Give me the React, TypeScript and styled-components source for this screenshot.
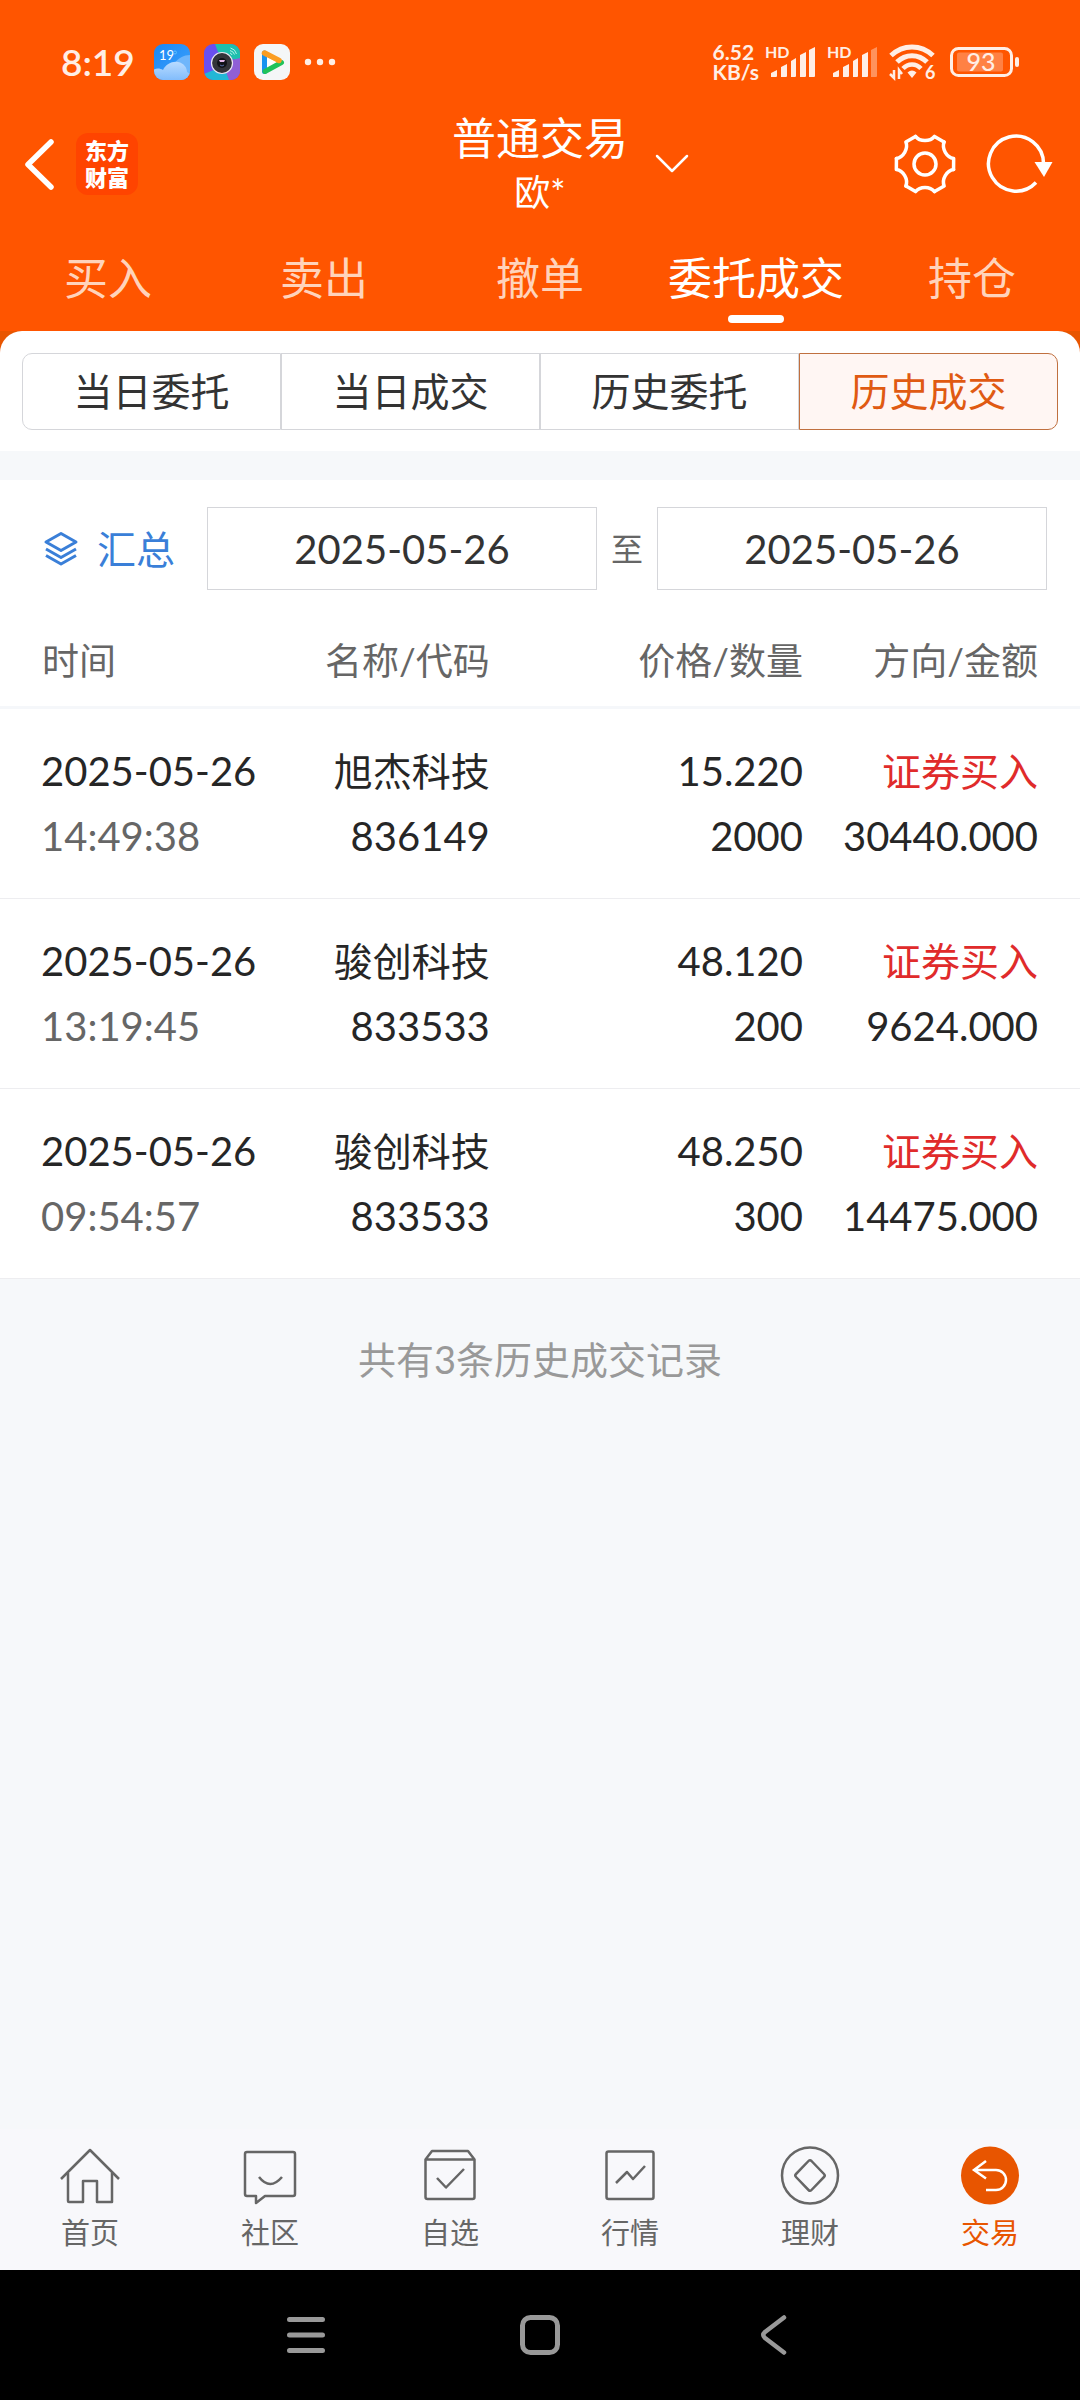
import React, { useState } from "react";
import styled, { createGlobalStyle } from "styled-components";

const color = {
  brand: "#ff5500",
  brandDeep: "#e85500",
  ink: "#262626",
  inkSoft: "#333333",
  muted: "#666666",
  faint: "#999999",
  line: "#d5d6da",
  rowLine: "#ededf0",
  page: "#f6f8fa",
  bar: "#f8f8fb",
  blue: "#3a7fd8",
  red: "#e02b2b",
};

const GlobalStyle = createGlobalStyle`
  *, *::before, *::after { box-sizing: border-box; }
  body {
    margin: 0;
    background: ${color.page};
    font-family: Lato, "Noto Sans CJK SC", sans-serif;
    color: ${color.ink};
  }
  button, input { font: inherit; color: inherit; }
  button { border: 0; padding: 0; background: none; cursor: pointer; }
  svg { display: block; flex: none; overflow: visible; }
`;

const Page = styled.div`
  display: flex;
  flex-direction: column;
  min-height: 100vh;
`;

/* ---------- status bar ---------- */

const Top = styled.header`
  background: ${color.brand};
  color: #fff;
`;

const StatusBar = styled.div`
  display: flex;
  align-items: center;
  justify-content: space-between;
  height: 110px;
  padding: 14px 61px 0 61px;
  color: #ffeee5;
`;

const StatusGroup = styled.div<{ $gap: number }>`
  display: flex;
  align-items: center;
  gap: ${(p) => p.$gap}px;
`;

const Clock = styled.span`
  margin-right: 5px;
  font-size: 37px;
  line-height: 40px;
  font-weight: 600;
`;

const Speed = styled.div`
  font-size: 21px;
  line-height: 20px;
  font-weight: 700;
`;

const SpeedLine = styled.div``;

/* ---------- title bar ---------- */

const TitleBar = styled.div`
  display: grid;
  grid-template-columns: 1fr auto 1fr;
  align-items: center;
`;

const TitleLeft = styled.div`
  display: flex;
  align-items: center;
  gap: 20px;
  padding-left: 22px;
`;

const TitleRight = styled.div`
  display: flex;
  align-items: center;
  justify-content: space-between;
  padding: 0 26px 0 26px;
`;

const Actions = styled.div`
  display: flex;
  gap: 28px;
`;

const Title = styled.h1`
  margin: 0;
  font-size: 44px;
  line-height: 56px;
  font-weight: 400;
  text-align: center;
`;

const Account = styled.div`
  font-size: 36px;
  line-height: 52px;
  text-align: center;
`;

const Logo = styled.div`
  display: grid;
  place-content: center;
  width: 62px;
  height: 62px;
  border-radius: 12px;
  background: #ff4400;
  font-size: 22px;
  line-height: 27px;
  font-weight: 900;
`;

/* ---------- main tabs ---------- */

const Tabs = styled.nav`
  display: grid;
  grid-template-columns: repeat(5, 1fr);
  padding: 30px 0 8px;
`;

const Tab = styled.button<{ $active: boolean }>`
  display: flex;
  flex-direction: column;
  align-items: center;
  gap: 7px;
  font-size: 44px;
  line-height: 60px;
  color: ${(p) => (p.$active ? "#fff" : "#ffd3bb")};

  &::after {
    content: "";
    width: 56px;
    height: 8px;
    border-radius: 4px;
    background: ${(p) => (p.$active ? "#fff" : "transparent")};
  }
`;

/* ---------- sheet ---------- */

const SheetBack = styled.div`
  background: ${color.brandDeep};
`;

const Sheet = styled.div`
  padding: 22px 22px 21px;
  border-radius: 22px 22px 0 0;
  background: #fff;
`;

const Segments = styled.div`
  display: grid;
  grid-template-columns: repeat(4, 1fr);
`;

const Segment = styled.button<{ $active: boolean }>`
  height: 77px;
  padding-bottom: 1px;
  border: 1px solid ${(p) => (p.$active ? "#c0703f" : color.line)};
  background: ${(p) => (p.$active ? "#fff6f3" : "#fff")};
  color: ${(p) => (p.$active ? "#e05a12" : color.inkSoft)};
  font-size: 39px;
  line-height: 56px;

  &:first-child { border-radius: 10px 0 0 10px; }
  &:last-child { border-radius: 0 10px 10px 0; }
`;

const Main = styled.main`
  flex: 1;
`;

const Panel = styled.section`
  margin-top: 29px;
  background: #fff;
`;

const Filter = styled.form`
  display: flex;
  align-items: center;
  gap: 14px;
  padding: 27px 33px 0 43px;
`;

const Summary = styled.button`
  display: flex;
  align-items: center;
  gap: 18px;
  margin-right: 18px;
  color: ${color.blue};
  font-size: 39px;
  line-height: 56px;
`;

const DateBox = styled.input`
  flex: 1;
  min-width: 0;
  height: 83px;
  padding: 0;
  border: 1px solid ${color.line};
  border-radius: 0;
  background: #fff;
  color: ${color.inkSoft};
  font-size: 40px;
  text-align: center;
`;

const To = styled.span`
  color: ${color.muted};
  font-size: 32px;
  line-height: 56px;
`;

/* ---------- table ---------- */

const Table = styled.table`
  width: 100%;
  margin-top: 29px;
  table-layout: fixed;
  border-collapse: separate;
  border-spacing: 0;
`;

const Th = styled.th<{ $width: number }>`
  width: ${(p) => p.$width}%;
  height: 90px;
  padding: 0 7px 3px 0;
  border-bottom: 3px solid #f5f7fa;
  color: ${color.muted};
  font-size: 37px;
  line-height: 56px;
  font-weight: 400;
  text-align: right;

  &:first-child { padding-left: 42px; text-align: left; }
  &:last-child { padding-right: 42px; }
`;

const Td = styled.td`
  padding: 30px 7px 29px 0;
  border-bottom: 1px solid ${color.rowLine};
  text-align: right;
  white-space: nowrap;

  &:first-child { padding-left: 41px; text-align: left; }
  &:last-child { padding-right: 42px; }
`;

const Line = styled.div<{ $tone?: string; $size?: number }>`
  color: ${(p) => p.$tone ?? color.ink};
  font-size: ${(p) => p.$size ?? 40}px;
  line-height: 65px;
`;

const Total = styled.p`
  margin: 52px 0 0;
  color: ${color.faint};
  font-size: 38px;
  line-height: 56px;
  text-align: center;
`;

/* ---------- bottom bars ---------- */

const BottomNav = styled.nav`
  display: grid;
  grid-template-columns: repeat(6, 1fr);
  padding: 16px 0 17px;
  background: ${color.bar};
`;

const BottomLink = styled.a<{ $active: boolean }>`
  display: flex;
  flex-direction: column;
  align-items: center;
  gap: 8px;
  color: ${(p) => (p.$active ? color.brandDeep : color.muted)};
  font-size: 29px;
  line-height: 40px;
  text-decoration: none;
`;

const SystemBar = styled.div`
  display: grid;
  grid-template-columns: repeat(3, 234px);
  justify-content: center;
  align-items: center;
  height: 130px;
  background: #000;
`;

const SystemKey = styled.button`
  display: grid;
  place-items: center;
  height: 100%;
`;

/* ---------- drawings ---------- */

const WeatherIcon = () => (
  <svg width="36" height="36" viewBox="0 0 36 36" aria-hidden="true">
    <defs>
      <linearGradient id="sky" x1="0" y1="0" x2="1" y2="1">
        <stop offset="0" stopColor="#1a86f5" />
        <stop offset="1" stopColor="#3fa4fb" />
      </linearGradient>
      <linearGradient id="cloud" x1="0" y1="0" x2="0" y2="1">
        <stop offset="0" stopColor="#b9dbff" />
        <stop offset="1" stopColor="#7cb9fb" />
      </linearGradient>
      <clipPath id="tile"><rect width="36" height="36" rx="9" /></clipPath>
    </defs>
    <g clipPath="url(#tile)">
      <rect width="36" height="36" fill="url(#sky)" />
      <path d="M20 20c4-6 10-9 16-9v25H20z" fill="#6fb6fb" />
      <path d="M-1 26c3-2 7-2 10 0 3-6 9-9 15-8 6 1 9 6 9 10l3 2v8H-1z" fill="url(#cloud)" />
    </g>
    <text x="5" y="16" fontSize="13" fill="#fff" fontFamily="Lato, sans-serif">19</text>
    <circle cx="21" cy="8.500" r="1.500" fill="none" stroke="#5fc0ff" strokeWidth="1" />
  </svg>
);

const CameraIcon = () => (
  <svg width="36" height="36" viewBox="0 0 36 36" aria-hidden="true">
    <g clipPath="url(#tile)">
      <rect width="36" height="36" fill="#6a4ff0" />
      <path d="M11 0h25v17L24 14 14 8z" fill="#1fbfae" />
      <path d="M36 14v22H24l-2-10 6-10z" fill="#8f5fd6" />
      <path d="M0 30l12-5 10 3 3 8H0z" fill="#22b7d6" />
    </g>
    <circle cx="18" cy="19" r="10.500" fill="#34343a" stroke="#e9e6f2" strokeWidth="1.200" />
    <circle cx="18" cy="19" r="5" fill="#121218" />
    <path d="M15 16h6l-1 2h-4z" fill="#e6b8ea" />
    <path d="M16 21q2 2 4 0" fill="none" stroke="#5a6ea8" strokeWidth="1" />
    <path d="M26 9a3 3 0 0 1 2 2M26 6.500a6 6 0 0 1 4.500 4M26.500 4a8 8 0 0 1 6 6" fill="none" stroke="#d6fff8" strokeWidth="0.800" />
  </svg>
);

const PlayIcon = () => (
  <svg width="36" height="36" viewBox="0 0 36 36" aria-hidden="true">
    <rect width="36" height="36" rx="9" fill="#f4f6f7" />
    <path d="M10.500 9v18.500" stroke="#1893f0" strokeWidth="5" strokeLinecap="round" />
    <path d="M11 27.500l16.500-9" stroke="#1fc25a" strokeWidth="5" strokeLinecap="round" />
    <path d="M10.500 9L25 16.500" stroke="#fb9d22" strokeWidth="5.500" strokeLinecap="round" />
    <path d="M13 13.500v9.500l9-5z" fill="#fff" />
  </svg>
);

const MoreDots = () => (
  <svg width="32" height="8" viewBox="0 0 32 8" fill="currentColor" aria-hidden="true">
    <circle cx="4" cy="4" r="3.200" />
    <circle cx="16" cy="4" r="3.200" />
    <circle cx="28" cy="4" r="3.200" />
  </svg>
);

const Signal = ({ weak = false }: { weak?: boolean }) => (
  <svg width="50" height="36" viewBox="0 0 50 36" fill="currentColor" aria-hidden="true">
    <text x="0" y="14" fontSize="16" fontWeight="700" fontFamily="Lato, sans-serif">HD</text>
    <path d="M6 33v-4l6-3v6q0 1-1 1zM16 33V23l6-3v12q0 1-1 1zM26 33V17l5-3v18q0 1-1 1zM35 33V11l6-3v24q0 1-1 1z" />
    <path d="M44 33V6l6-3v29q0 1-1 1z" opacity={weak ? 0.4 : 1} />
  </svg>
);

const Wifi = () => (
  <svg width="46" height="38" viewBox="0 0 46 38" fill="none" stroke="currentColor" aria-hidden="true">
    <path d="M2 12.500c12-11.500 30-11.500 42 0" strokeWidth="5" />
    <path d="M8 19c8.500-8.500 21.500-8.500 30 0" strokeWidth="5" />
    <path d="M14 25.500c5-5.500 13-5.500 18 0" strokeWidth="4.500" />
    <path d="M18.500 29.500q4.500-4 9 0L23 35z" fill="currentColor" stroke="none" />
    <path d="M5 27v8l-4-4M10 36v-9l3 4" strokeWidth="2.500" />
    <text x="36" y="36" fontSize="18" fontWeight="700" fontFamily="Lato, sans-serif" fill="currentColor" stroke="none">6</text>
  </svg>
);

const Battery = () => (
  <svg width="72" height="32" viewBox="-3 0 72 32" aria-hidden="true">
    <rect x="1.500" y="2.500" width="60" height="27" rx="7" fill="none" stroke="currentColor" strokeWidth="3" />
    <rect x="7" y="6.500" width="46" height="19" rx="2" fill="#ff8144" />
    <rect x="65" y="11" width="4" height="10" rx="2" fill="currentColor" />
    <text x="31" y="25" fontSize="25" fontWeight="500" textAnchor="middle" fontFamily="Lato, sans-serif" fill="currentColor">93</text>
  </svg>
);

const BackIcon = () => (
  <svg width="34" height="52" viewBox="0 0 34 52" fill="none" stroke="#fff" strokeWidth="5.500" strokeLinecap="round" strokeLinejoin="round" aria-hidden="true">
    <path d="M29 4L6 26.500l23 22.500" />
  </svg>
);

const DownIcon = () => (
  <svg width="36" height="22" viewBox="0 0 36 22" fill="none" stroke="#fff" strokeWidth="2.500" strokeLinecap="round" strokeLinejoin="round" aria-hidden="true">
    <path d="M3 3l15 15L33 3" />
  </svg>
);

const lobe = "M-9.500 -27.600C-5 -22 5 -22 9.500 -27.600L19 -22";

const GearIcon = () => (
  <svg width="64" height="64" viewBox="-31 -32 64 64" fill="none" stroke="#fff" strokeWidth="3.500" strokeLinecap="round" strokeLinejoin="round" aria-hidden="true">
    {[0, 60, 120, 180, 240, 300].map((turn) => (
      <path key={turn} d={lobe} transform={`rotate(${turn})`} />
    ))}
    <circle r="11" />
  </svg>
);

const RefreshIcon = () => (
  <svg width="68" height="64" viewBox="0 0 68 64" aria-hidden="true">
    <path d="M50 50.500A27.500 27.500 0 1 1 57.500 32" fill="none" stroke="#fff" strokeWidth="3.500" />
    <path d="M48.500 30h18L58 45z" fill="#fff" />
  </svg>
);

const LayersIcon = () => (
  <svg width="36" height="38" viewBox="0 0 36 38" fill="none" stroke="currentColor" strokeWidth="3" strokeLinejoin="round" aria-hidden="true">
    <path d="M18 3.500l15 8.500-15 8.500L3 12z" />
    <path d="M3 19l15 8.500L33 19M3 25.500l15 8.500L33 25.500" />
  </svg>
);

const line = {
  width: 60,
  height: 60,
  viewBox: "0 0 60 60",
  fill: "none",
  stroke: "currentColor",
  strokeWidth: 2.5,
  strokeLinejoin: "round" as const,
  "aria-hidden": true,
};

const HomeIcon = () => (
  <svg {...line}>
    <path d="M1 34L30 5l29 29" />
    <path d="M8 28v28q0 1 1 1h14V36h14v21h15V28" />
  </svg>
);

const ChatIcon = () => (
  <svg {...line}>
    <path d="M7 7h46q2 0 2 2v40q0 2-2 2H25l-9 7v-7H7q-2 0-2-2V9q0-2 2-2z" />
    <path d="M19 32q11 14 23 0" />
  </svg>
);

const PickIcon = () => (
  <svg {...line}>
    <path d="M5.500 14.500L12 6h36l6.500 8.500V52q0 2-2 2h-45q-2 0-2-2zM5.500 14.500h49" />
    <path d="M17 33l9 9.500L44 24" />
  </svg>
);

const ChartIcon = () => (
  <svg {...line}>
    <rect x="6.500" y="6.500" width="47" height="47.500" rx="2" />
    <path d="M16 38l11-11 6 7 12-13" />
  </svg>
);

const WealthIcon = () => (
  <svg {...line}>
    <circle cx="30" cy="30.500" r="28" />
    <path d="M31.500 16l12.500 13q1.500 1.500 0 3L31.500 45q-1.500 1.500-3 0L16 32q-1.500-1.500 0-3l12.500-13q1.500-1.500 3 0z" />
  </svg>
);

const TradeIcon = () => (
  <svg {...line}>
    <circle cx="30" cy="30.500" r="29" fill={color.brandDeep} stroke="none" />
    <path d="M26 16L14 25l12 8.500M14 25h22a10 10 0 0 1 0 20H26" stroke="#fff" strokeLinejoin="miter" />
  </svg>
);

const RecentsIcon = () => (
  <svg width="40" height="40" viewBox="0 0 40 40" stroke="#999" strokeWidth="5" strokeLinecap="round" aria-hidden="true">
    <path d="M3.500 4.500h33M3.500 20h33M3.500 35.500h33" />
  </svg>
);

const HomeKeyIcon = () => (
  <svg width="40" height="40" viewBox="0 0 40 40" fill="none" stroke="#999" strokeWidth="5" aria-hidden="true">
    <rect x="2.500" y="2.500" width="35" height="35" rx="8" />
  </svg>
);

const BackKeyIcon = () => (
  <svg width="40" height="40" viewBox="0 0 40 40" fill="none" stroke="#999" strokeWidth="4.500" strokeLinecap="round" strokeLinejoin="round" aria-hidden="true">
    <path d="M30 2.500L11 17q-3.500 3 0 6l19 14.500" />
  </svg>
);

/* ---------- data ---------- */

const tabs = ["买入", "卖出", "撤单", "委托成交", "持仓"];
const segments = ["当日委托", "当日成交", "历史委托", "历史成交"];
const columns = [
  { label: "时间", width: 25 },
  { label: "名称/代码", width: 21 },
  { label: "价格/数量", width: 29 },
  { label: "方向/金额", width: 25 },
];
const deals = [
  { date: "2025-05-26", time: "14:49:38", name: "旭杰科技", code: "836149", price: "15.220", count: "2000", side: "证券买入", amount: "30440.000" },
  { date: "2025-05-26", time: "13:19:45", name: "骏创科技", code: "833533", price: "48.120", count: "200", side: "证券买入", amount: "9624.000" },
  { date: "2025-05-26", time: "09:54:57", name: "骏创科技", code: "833533", price: "48.250", count: "300", side: "证券买入", amount: "14475.000" },
];
const sections = [
  { label: "首页", Icon: HomeIcon },
  { label: "社区", Icon: ChatIcon },
  { label: "自选", Icon: PickIcon },
  { label: "行情", Icon: ChartIcon },
  { label: "理财", Icon: WealthIcon },
  { label: "交易", Icon: TradeIcon },
];

export default function App() {
  const [tab, setTab] = useState("委托成交");
  const [segment, setSegment] = useState("历史成交");
  const [from, setFrom] = useState("2025-05-26");
  const [to, setTo] = useState("2025-05-26");

  return (
    <Page>
      <GlobalStyle />
      <Top>
        <StatusBar>
          <StatusGroup $gap={14}>
            <Clock>8:19</Clock>
            <WeatherIcon />
            <CameraIcon />
            <PlayIcon />
            <MoreDots />
          </StatusGroup>
          <StatusGroup $gap={12}>
            <StatusGroup $gap={6}>
              <Speed>
                <SpeedLine>6.52</SpeedLine>
                <SpeedLine>KB/s</SpeedLine>
              </Speed>
              <Signal />
            </StatusGroup>
            <Signal weak />
            <Wifi />
            <Battery />
          </StatusGroup>
        </StatusBar>

        <TitleBar>
          <TitleLeft>
            <button type="button" aria-label="返回"><BackIcon /></button>
            <Logo>
              <span>东方</span>
              <span>财富</span>
            </Logo>
          </TitleLeft>
          <div>
            <Title>普通交易</Title>
            <Account>欧*</Account>
          </div>
          <TitleRight>
            <button type="button" aria-label="切换账户"><DownIcon /></button>
            <Actions>
              <button type="button" aria-label="设置"><GearIcon /></button>
              <button type="button" aria-label="刷新"><RefreshIcon /></button>
            </Actions>
          </TitleRight>
        </TitleBar>

        <Tabs>
          {tabs.map((label) => (
            <Tab key={label} type="button" $active={label === tab} onClick={() => setTab(label)}>
              {label}
            </Tab>
          ))}
        </Tabs>
      </Top>

      <Main>
        <SheetBack>
          <Sheet>
            <Segments>
              {segments.map((label) => (
                <Segment key={label} type="button" $active={label === segment} onClick={() => setSegment(label)}>
                  {label}
                </Segment>
              ))}
            </Segments>
          </Sheet>
        </SheetBack>

        <Panel>
          <Filter onSubmit={(e) => e.preventDefault()}>
            <Summary type="button">
              <LayersIcon />
              汇总
            </Summary>
            <DateBox aria-label="开始日期" value={from} onChange={(e) => setFrom(e.target.value)} />
            <To>至</To>
            <DateBox aria-label="结束日期" value={to} onChange={(e) => setTo(e.target.value)} />
          </Filter>

          <Table>
            <thead>
              <tr>
                {columns.map((c) => (
                  <Th key={c.label} scope="col" $width={c.width}>{c.label}</Th>
                ))}
              </tr>
            </thead>
            <tbody>
              {deals.map((d) => (
                <tr key={d.time}>
                  <Td>
                    <Line>{d.date}</Line>
                    <Line $tone={color.muted}>{d.time}</Line>
                  </Td>
                  <Td>
                    <Line $size={39}>{d.name}</Line>
                    <Line>{d.code}</Line>
                  </Td>
                  <Td>
                    <Line>{d.price}</Line>
                    <Line>{d.count}</Line>
                  </Td>
                  <Td>
                    <Line $size={39} $tone={color.red}>{d.side}</Line>
                    <Line>{d.amount}</Line>
                  </Td>
                </tr>
              ))}
            </tbody>
          </Table>
        </Panel>
        <Total>共有{deals.length}条历史成交记录</Total>
      </Main>

      <BottomNav>
        {sections.map(({ label, Icon }) => (
          <BottomLink key={label} href="#" $active={label === "交易"}>
            <Icon />
            {label}
          </BottomLink>
        ))}
      </BottomNav>
      <SystemBar>
        <SystemKey type="button" aria-label="最近任务"><RecentsIcon /></SystemKey>
        <SystemKey type="button" aria-label="主屏幕"><HomeKeyIcon /></SystemKey>
        <SystemKey type="button" aria-label="后退"><BackKeyIcon /></SystemKey>
      </SystemBar>
    </Page>
  );
}
